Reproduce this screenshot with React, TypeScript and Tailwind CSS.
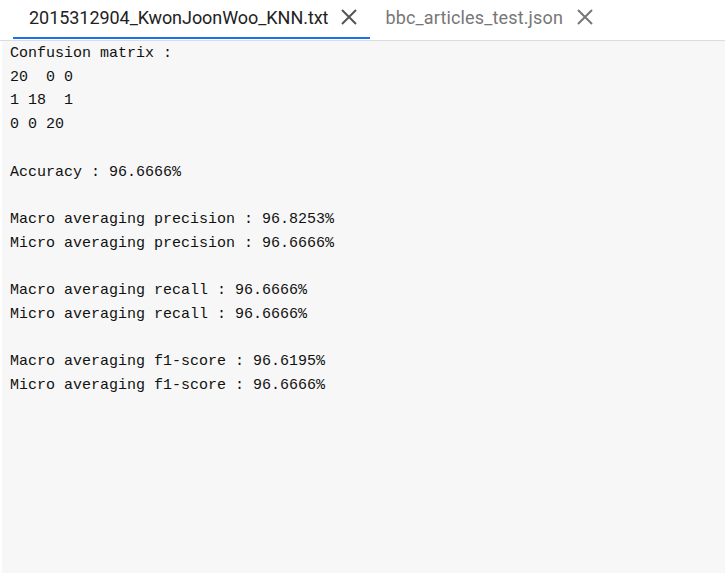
const lines = [
  "Confusion matrix :",
  "20  0 0",
  "1 18  1",
  "0 0 20",
  "",
  "Accuracy : 96.6666%",
  "",
  "Macro averaging precision : 96.8253%",
  "Micro averaging precision : 96.6666%",
  "",
  "Macro averaging recall : 96.6666%",
  "Micro averaging recall : 96.6666%",
  "",
  "Macro averaging f1-score : 96.6195%",
  "Micro averaging f1-score : 96.6666%",
];

function CloseIcon({ color }: { color: string }) {
  return (
    <svg width="16" height="16" viewBox="0 0 16 16" className="shrink-0">
      <path d="M1 1L15 15M15 1L1 15" stroke={color} strokeWidth="2" />
    </svg>
  );
}

export default function App() {
  return (
    <div className="h-[574px] w-[725px] bg-white flex flex-col overflow-hidden">
      <div className="h-[41px] shrink-0 flex pl-[13px] border-b border-[#dadce0]">
        <div className="flex items-center h-[39px] pb-[3px] pl-4 pr-[13px] gap-[13px] text-[#222] border-b-2 border-[#1a73e8]">
          <span className="text-[18px] font-['Roboto',sans-serif] tracking-[-0.05px]">
            2015312904_KwonJoonWoo_KNN.txt
          </span>
          <CloseIcon color="#555" />
        </div>
        <div className="flex items-center h-[39px] pb-[3px] pl-[15px] pr-[13px] gap-[14px] text-[#777] border-b-2 border-transparent">
          <span className="text-[18px] font-['Roboto',sans-serif] tracking-[0.15px]">
            bbc_articles_test.json
          </span>
          <CloseIcon color="#777" />
        </div>
      </div>
      <div className="flex-1 ml-[2px] mb-[1px] bg-[#f7f7f7] px-2">
        <pre className="pt-px font-['Liberation_Mono',monospace] text-[15px] leading-[23.7px] text-[#111]">
          {lines.map((l) => l + "\n").join("")}
        </pre>
      </div>
    </div>
  );
}
